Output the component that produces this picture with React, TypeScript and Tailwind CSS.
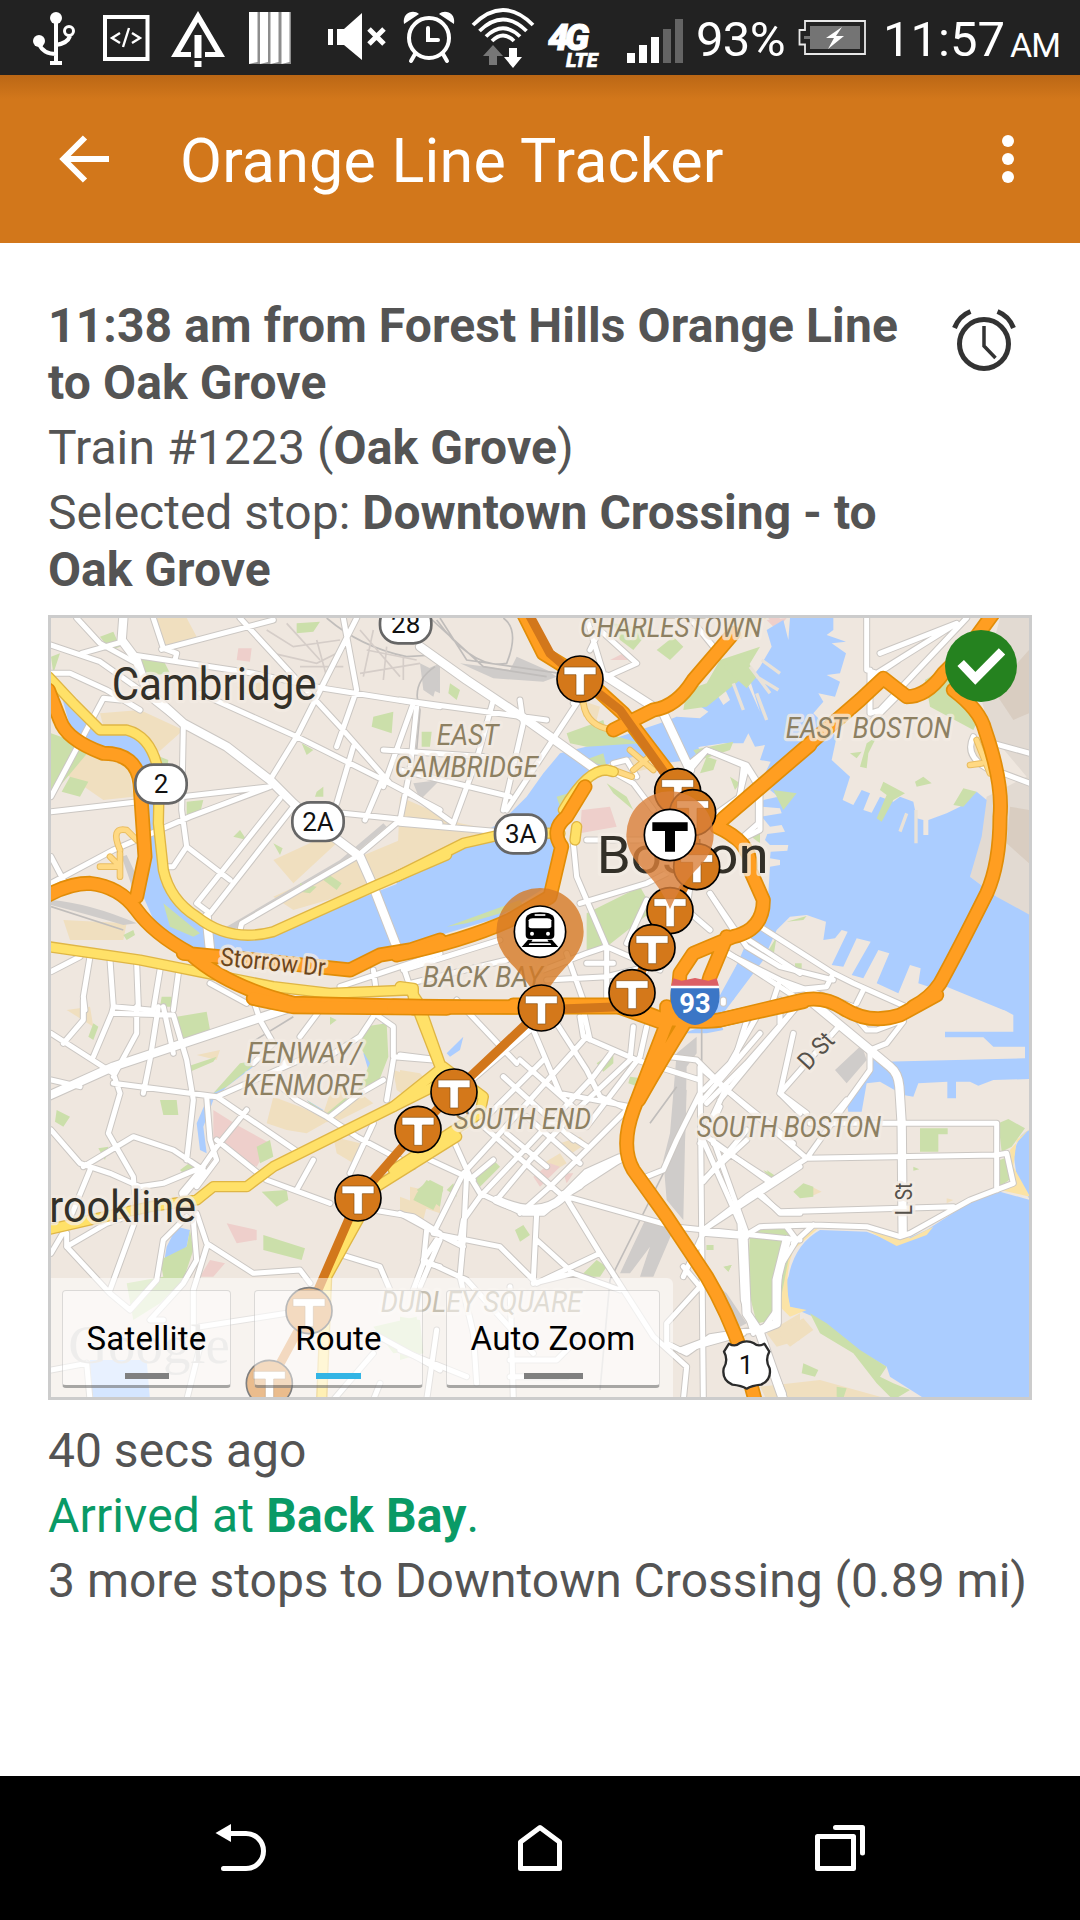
import type { ReactNode } from 'react';

interface GlyphProps {
  box: string;
  className: string;
  children: ReactNode;
}

function Glyph({ box, className, children }: GlyphProps) {
  return (
    <svg viewBox={box} className={`block shrink-0 ${className}`} fill="none" aria-hidden="true">
      {children}
    </svg>
  );
}

function StatusBar() {
  return (
    <div className="flex h-[75px] items-center bg-[#222222] pl-[30px] text-white">
      <Glyph box="30 0 50 75" className="h-[75px] w-[50px]">
        <circle cx="56" cy="18" r="6" fill="#fff" />
        <circle cx="39" cy="41" r="6" fill="#fff" />
        <circle cx="69" cy="31" r="4.5" stroke="#fff" strokeWidth="3" />
        <path d="M56 18V63M39 44C42 51 47 54 56 54M70 36C68 42 63 44 56 45" stroke="#fff" strokeWidth="4" />
        <path d="M50 61H62V65H50Z" fill="#fff" />
      </Glyph>
      <Glyph box="100 0 52 75" className="ml-5 h-[75px] w-[52px]">
        <rect x="105" y="17" width="42.5" height="42" stroke="#fff" strokeWidth="4" />
        <path d="M120 33L112 38L120 43M132 33L140 38L132 43M129 28L123 47" stroke="#fff" strokeWidth="2.4" />
      </Glyph>
      <Glyph box="170 0 56 75" className="ml-[18px] h-[75px] w-[56px]">
        <path
          d="M198 11L225 57H205V52H215.500L198 22L180.500 52H191V57H171Z"
          fill="#fff"
        />
        <path d="M194.500 35H201.500V58H194.500ZM194.500 61H201.500V67H194.500Z" fill="#fff" />
      </Glyph>
      <Glyph box="248 0 44 75" className="ml-[22px] h-[75px] w-[44px]">
        <rect x="249" y="12" width="42" height="52" fill="#8d8d8d" />
        <path d="M249 12H257.500V62L249 64ZM260 12H268V62L260 64ZM270.500 12H278.500V62L270.500 64ZM281.500 12H289.500V62L281.500 64Z" fill="#fff" />
      </Glyph>
      <Glyph box="326 0 62 75" className="ml-[34px] h-[75px] w-[62px]">
        <path d="M328 29H333V45H328ZM337 29H344L362 13V60L344 45H337Z" fill="#fff" />
        <path d="M369 29L384 44M384 29L369 44" stroke="#fff" strokeWidth="5" />
      </Glyph>
      <Glyph box="400 0 58 75" className="ml-3 h-[75px] w-[58px]">
        <circle cx="429" cy="38" r="20" stroke="#fff" strokeWidth="4" />
        <path d="M404 24C402 13 413 9 419 14ZM454 24C456 13 445 9 439 14Z" fill="#fff" />
        <path d="M415 54L411 61M443 54L447 61" stroke="#fff" strokeWidth="4" strokeLinecap="round" />
        <path d="M428 28V40H438" stroke="#fff" strokeWidth="4" strokeLinecap="round" />
      </Glyph>
      <Glyph box="470 0 66 75" className="ml-3 h-[75px] w-[66px]">
        <path
          d="M473 25Q503 -5 533 25M479.500 31Q503 8 526.500 31M486 36.500Q503 20 520 36.500M492 41Q503 30 514 41"
          stroke="#fff"
          strokeWidth="3.800"
        />
        <path d="M493 45L503 56H497V65H489V56H483Z" fill="#777" />
        <path d="M513 68L504 57H509V48H517V57H522Z" fill="#fff" />
      </Glyph>
      <div className="ml-3 flex w-[60px] flex-col pt-[17px] font-['Roboto'] font-black italic">
        <span className="text-[37px] leading-[29px] tracking-[-4px] [-webkit-text-stroke:1px_#fff]">4G</span>
        <span className="pl-[18px] text-[20px] leading-[17px] [-webkit-text-stroke:0.5px_#fff]">LTE</span>
      </div>
      <div className="ml-[19px] flex h-[50px] items-end gap-1">
        <div className="h-[10px] w-2 bg-white" />
        <div className="h-[18px] w-2 bg-white" />
        <div className="h-[26px] w-2 bg-white" />
        <div className="h-[34px] w-2 bg-[#646464]" />
        <div className="h-[44px] w-2 bg-[#646464]" />
      </div>
      <span className="ml-[13px] w-[102px] pt-[3px] text-[49px] leading-none tracking-[-0.7px]">93%</span>
      <Glyph box="798 0 70 75" className="h-[75px] w-[70px]">
        <path d="M805 21H865V54H805V44.500H799.500V30H805Z" stroke="#e8e8e8" strokeWidth="1.800" />
        <path d="M810 26H860V49H810V39H804V36H810Z" fill="#747474" />
        <path d="M842 27L826 38H834L828 49L844 36H836Z" fill="#fff" />
      </Glyph>
      <span className="ml-[15px] w-[127px] pt-[3px] text-[49px] leading-none">11:57</span>
      <span className="pt-[14px] text-[34px] leading-none tracking-[-1px]">AM</span>
    </div>
  );
}

function TitleBar() {
  return (
    <header className="flex h-[168px] items-center bg-[linear-gradient(#bb6715,#d2771b_24px)] pl-[59px] text-white">
      <Glyph box="58 133 52 52" className="h-[52px] w-[52px]">
        <path d="M84 137.500L62.500 159L84 180.500M62.500 159H108" stroke="#fff" strokeWidth="6" />
      </Glyph>
      <h1 className="ml-[69px] pt-[5px] text-[61px] leading-none tracking-[0.2px]">Orange Line Tracker</h1>
      <div className="ml-auto mr-[66px] flex flex-col gap-[6px]">
        <div className="size-3 rounded-full bg-white" />
        <div className="size-3 rounded-full bg-white" />
        <div className="size-3 rounded-full bg-white" />
      </div>
    </header>
  );
}

/* ---------- map ---------- */

interface Sector {
  at: string;
  water?: string;
  zones?: string;
  parks?: string;
  clinics?: string;
  sand?: string;
  rail?: string;
  streets?: string;
  avenues?: string;
  yellow?: string;
  ramps?: string;
  highway?: string;
}

// The map is drawn in six sectors, each with its own origin
const sectors: Sector[] = [
  {
    at: 'translate(0 0)',
    water:
      'M60 240L180 350L270 375L350 430L365 560L350 700L385 860L500 960L620 990L720 970L860 900L1000 850L1200 770V1000L1010 1040L930 1080L860 1075L540 1030L450 1010L350 950L310 860L325 700L315 480L270 430L160 400L90 350Z',
    zones:
      'M350 24H440L470 80L370 115ZM180 310L300 300L430 360L340 440L290 370L190 350ZM60 480L130 420L260 430L280 560L190 570ZM960 740L1200 640V740L1000 830L760 900L700 860ZM70 930L260 940L250 990L90 990ZM1040 24L1090 24L1080 50ZM590 230L700 210L690 260L600 250ZM700 750L830 690L900 690L760 820Z',
    parks:
      'M33 370L90 390L150 420L33 560ZM180 80L220 65L240 110L210 120ZM300 140L370 150L390 190L300 200ZM1000 320L1060 305L1055 370L995 350ZM340 500L380 490L385 450L360 440ZM90 500L145 515L120 560L65 545ZM440 575L490 570L480 610L440 620ZM370 880L480 970L460 980L390 950ZM770 40L840 35L820 65L770 70ZM785 400L820 420L800 435ZM860 790L905 820L890 840L850 810ZM780 820L830 830L810 850L780 845ZM700 700L728 715L720 735ZM830 545L850 530L850 560L825 560ZM250 975L280 960L285 975L260 990ZM365 1160L395 1160L395 1190L360 1190ZM600 660L620 690L580 680ZM1145 365L1175 365L1170 410L1145 410ZM33 140L60 130L40 190Z',
    clinics: 'M595 115L635 115L630 155L590 150Z',
    rail:
      'M33 870Q150 880 290 940L250 945Q150 915 33 885ZM245 740L260 735L310 840L290 870ZM560 950L900 750L1030 640L1040 650L910 760L580 960ZM1120 520L1200 510L1140 570ZM1155 180L1200 160V250L1165 235Z',
    streets:
      'M33 105L180 155L300 240L440 350M110 24L180 100L290 160M125 130L250 95M340 24L370 115L410 130L405 150M365 118L700 30M280 135L640 190L850 235L1200 290M33 190L90 190L200 240L300 300M240 270L190 265L33 560M430 350L425 600L440 710L570 810M440 710L400 770L375 770M600 24L900 350L1050 520M480 250L770 380L1030 510L1200 600M950 24L770 380L690 510M910 24L950 240L890 410M33 605L690 530M33 820L220 720L450 620L690 530M720 565L470 880L510 910L760 590M600 960L605 940L950 740L1080 630L1110 480L1130 290M940 410L890 580M910 610L1200 640M1030 500L975 630M33 1085L120 1040M150 1040L130 1160L135 1200M210 1050L220 1190L330 1200M290 1060L295 1190M360 1080L340 1200M415 1090L400 1200M510 1120L620 1180M900 1130L1200 1030M1000 1080L1010 1150M1090 1070L1110 1130M33 740L70 810',
    avenues:
      'M250 24L245 90L290 150L320 240L430 340L560 410L690 510L760 580L840 650L960 740L1000 830L1070 1010M500 920L510 1020',
    yellow:
      'M25 200L100 280L180 360L260 360Q340 380 358 500L355 640L370 780Q390 870 470 920Q570 1000 700 965L1000 830L1220 735M25 1010L300 1050L700 1130L870 1150L1110 1140L1150 1200',
    ramps: 'M240 720Q210 650 260 660L290 690M240 730L240 800M180 770L240 770L210 740',
    highway:
      'M25 240L60 330Q80 390 190 430Q290 430 300 520L315 740L290 860M25 855Q90 820 150 820Q240 830 290 900Q340 970 450 1030Q560 1130 760 1180L1220 1192M430 1030L640 1050L930 1080L1020 1035L1110 1020L1200 990',
  },
  {
    at: 'translate(1080 0)',
    water:
      'M900 420L830 320L780 340L600 400L480 430L430 490L380 560L300 640L140 720L-10 790V1015L290 925L440 830L480 650L540 560L570 490L630 460L700 440L790 460L870 450ZM1060 950L1110 965L1000 1170H965Z',
    zones:
      'M0 560L180 640L330 670L180 720L-10 790ZM540 270L600 290L590 330L550 320ZM690 410L780 400L770 470L690 490ZM980 24L1080 24L1050 80L960 100Z',
    parks:
      'M640 40L750 60L700 120L660 90ZM770 120L820 80L850 110L810 150ZM860 240L920 220L960 150L1080 110L1020 210L920 290L850 300ZM500 370L610 330L620 370L720 400L560 410L510 400ZM880 420L1000 395L990 420L900 450ZM560 910L720 830L760 900L620 1010L560 1020ZM150 220L180 240L170 270L145 250ZM470 560L520 545L530 600L490 620ZM140 950L360 870L370 890L200 940ZM1120 540L1190 550L1150 600ZM555 450L610 430L620 470ZM620 520L680 560L700 600L640 550Z',
    clinics: 'M545 600L630 590L650 650L540 670ZM1100 30L1160 24L1130 60ZM630 150L670 130L690 150Z',
    rail: 'M180 160L330 180L350 140L440 180L470 200L430 215L280 205ZM60 160L120 190L100 260L70 240Z',
    streets:
      'M0 270L440 330M360 270L370 340L310 600M280 270L230 450L160 640M-50 420L260 440M0 480L330 560M20 540L160 640M0 640L300 665M530 280L320 600M40 280L-50 530M560 24L610 190L520 280M570 120L600 60L710 160L620 200M870 24L940 110M870 480L920 420L1040 470L1080 540L1080 660L1020 690M1040 470L1010 590L950 640M560 690L740 690M520 700L530 800L620 1010L620 1190M540 880L740 820L800 790M740 870L680 1000M430 1080L560 1030L620 1010L780 1080M10 1080L300 990M30 1120L320 1050M500 1030L560 1200M440 1110L620 1100L780 1060M700 1200L740 1070M560 1060L640 1060M630 480L700 520L760 600M930 850L1000 960L1200 1090M940 1000L1200 1170M880 760L860 900L930 960M640 460L680 450L710 500M300 1200L420 1150',
    avenues: 'M60 110L200 210L380 330L590 480M620 200L790 310L870 480',
    yellow: 'M-10 800L190 700L330 668L480 670M490 600Q560 480 620 480L640 485M530 650L525 690M0 1130L40 1135L40 1200',
    ramps: 'M550 280Q560 350 640 360M760 430L700 480M690 420L760 480M640 480L695 500',
    highway:
      'M370 10L430 130L560 210L670 310L830 520M1000 70L880 210Q830 290 760 300L640 360M-10 1035Q200 990 330 930L450 860L485 710Q450 660 500 620L555 530M955 640L1230 405M950 650Q1060 700 1050 780L1090 870Q1090 960 1000 980L880 1030L840 1090L830 1200M980 980L930 1100L910 1170M350 1192L-20 1188M340 1185L640 1185L780 1235',
  },
  {
    at: 'translate(1920 0)',
    water:
      'M330 24H460V60L440 75L498 95L455 100L498 130L480 190L440 195L480 215L465 260L415 250L430 275L400 310L470 380L455 450L510 500L488 570L520 585L545 540L570 550L550 600L575 608L600 560L640 575L660 560L700 575L710 625L730 630V675H745V630L800 610L840 590L890 545L920 570L905 680L870 800L950 860L1050 915V1210L970 1200L800 1130L790 1145L715 1120L722 1075L690 1065L655 1150L590 1120L628 1030L595 1020L550 1105L515 1095L572 995L530 985L490 1070L455 1065L503 965L485 960L465 985L430 990L438 935L380 915L330 920L290 960L250 1050L130 1210H90L200 1010L270 900L265 850L270 770L300 765V750L270 745L272 725L322 722L325 705L270 705L255 690L262 672L315 665L305 645L270 650L245 620L305 610L300 595L245 590L250 570L295 560L270 540L290 515L250 500L272 455L240 450L255 405L225 410L205 370L190 400L130 400L60 410L0 440L-40 350L-10 320L60 325L85 305L40 275L60 235L100 235L130 285L150 270L115 195L190 195L240 305L210 210L240 170L275 110L260 60L310 30L325 90Z',
    zones: 'M170 24L260 24L200 60ZM880 390L905 390L930 490L880 450Z',
    parks:
      'M735 210L800 170L830 260L890 340L880 360L750 290ZM610 515L675 550L640 570L605 635L590 625L620 555L600 540ZM820 585L850 535L890 545L850 590ZM130 170L190 130L230 200L200 235ZM540 470L560 400L590 380L565 430L560 475ZM320 935L380 918L370 930ZM705 515L730 500L755 520L710 530ZM60 490L80 440L110 450L100 480ZM260 1030L290 980L280 1040ZM345 1060L365 1060L365 1080L345 1080ZM200 670L240 665L240 700ZM510 430L545 425L530 445ZM150 500L180 520L165 540Z',
    clinics: 'M265 24L300 24L285 50Z',
    streets:
      'M560 24V180L590 190L830 40L600 130M570 180V310L600 300L860 24M655 150L580 200M650 260L560 350M940 400L1050 430M970 490L1050 520M30 460L80 420L200 465L235 520V640L190 680M190 470L180 560L110 610M240 950L460 1090L520 1120L700 1200M100 1010L300 1110L520 1190M460 1090L440 1130L340 1140L300 1110L270 1200M550 1140L530 1180M90 850L200 1010L300 1070L460 1110M880 380Q850 440 930 480',
    ramps: 'M890 390L930 490M870 465L905 460',
    highway:
      'M940 10L860 120L790 190Q740 260 680 260L610 205L540 270L130 625M820 240Q900 300 915 360Q970 520 960 620Q960 760 920 850Q830 1030 780 1120Q750 1165 700 1190',
  },
  {
    at: 'translate(0 1170)',
    water:
      'M500 300L580 220L620 190L640 200L560 260L520 300L490 380L500 460L480 450L470 370ZM410 680L450 690L440 740L370 800L380 740ZM150 1080L320 1080L330 1200H150ZM970 160L1010 150L1030 60L1030 150L1000 200L1010 240L970 260L985 210ZM800 300L850 330L840 345Z',
    zones:
      'M700 290L780 320L870 360L800 400L740 390L680 370ZM880 250L960 280L1000 310L900 360L840 370ZM1060 210L1160 240L1100 290L1070 270ZM880 410L960 430L940 490L890 460ZM1110 560L1200 580V640L1110 610ZM80 30L150 20L160 80ZM470 165L540 150L530 180Z',
    parks:
      'M410 50L500 35L510 90L440 120L405 100ZM970 80L1040 70L1045 170L1010 260L950 280L990 190L960 140ZM440 200L530 170L520 185L450 215ZM600 190L660 180L560 260L520 280ZM50 330L90 350L70 380L45 365ZM360 300L410 300L415 345L370 345ZM670 705L795 745L785 780L670 750ZM665 575L740 570L745 600L710 620ZM370 830L360 780L440 740L450 690L460 750L430 840L360 910L280 960L260 850ZM800 300L860 340L920 290L920 320L860 360ZM1130 570L1170 540L1210 560L1200 620ZM175 445L205 440L195 480ZM145 110L160 70L175 80L160 120ZM1000 980L1130 950L1140 1050L1060 1060ZM870 50L890 60L870 75ZM650 440L690 420L700 470L660 490ZM420 510L460 480L480 500L440 530Z',
    clinics:
      'M520 330L600 380L690 430L650 500L600 480L520 420ZM560 670L650 690L650 720L590 730ZM510 780L555 790L520 830L480 830Z',
    streets:
      'M33 100L220 220L240 280L205 400L280 530L290 650L210 870M220 20L215 40L400 45L440 180L460 300L440 480M130 0L130 60L70 130M215 40L160 170M290 20L290 100L220 230M355 20L330 180L310 280M370 20L400 160M33 240L120 260M220 250L530 290L780 460M530 290L780 180M33 390L120 490L210 520L300 560L370 550L490 500M150 510L80 680L33 760M130 500L280 410L400 450L490 510M530 420L680 540L870 610M500 290L510 420L530 480L470 560M620 330L530 440L440 570M760 150L700 240L770 300L860 350L950 410L1120 500M660 60L700 130L640 190M640 0L660 60M840 30L780 110M1000 50L960 110L850 180M1010 45L1060 80L1060 170L1180 180M1060 180L1040 300M870 350L960 280L1030 240M1000 370L930 520M820 480L770 570M470 640L500 730L640 820L780 810L810 850M460 660L470 780L430 850L330 960L370 960M440 650L370 720L350 840L270 930L210 880L80 740L80 700M80 740L200 670L290 640M500 740L460 870L460 1000M1000 630L1120 650L1200 700M890 760L1020 800L1050 870M1160 690L1150 790L1120 870M480 980L740 940M33 1110L140 1090M140 1090L150 1200M440 1200L480 1040M1000 1000L1200 1110M880 1200L1000 1060M1160 790L1200 800M1020 1150L1000 1200',
    avenues: 'M20 290L220 200L640 60L790 10M480 520L430 580',
    yellow: 'M20 690L150 660L330 620L470 600L520 560L620 560L700 500L1200 250M1130 20L1200 200M1250 410L1010 560L860 830L845 1200',
    highway: 'M640 -5L760 20L1220 25',
  },
  {
    at: 'translate(1080 1170)',
    water: 'M140 160L190 110L180 150L150 170ZM850 100L960 60L970 90L920 100ZM1160 840L1200 780V930L1165 900Z',
    zones:
      'M0 210L60 220L100 260L40 290L0 270ZM480 430L540 410L560 430L500 470ZM0 590L80 620L70 660L0 640ZM430 490L480 460L500 490L450 520ZM1100 1000L1200 940V1020L1130 1040Z',
    parks:
      'M220 530L280 480L300 500L240 560ZM50 580L80 540L130 570L100 630L40 600ZM590 190L640 155L640 190L610 215ZM1050 700L1160 685L1175 730L1130 960L1070 970L1045 820ZM690 230L725 235L715 260L685 250ZM345 690L370 675L390 705L360 725ZM540 830L590 780L620 800L600 830ZM0 950L60 960L70 1060L0 1080ZM140 570L160 550L170 590ZM1100 510L1130 530L1110 530ZM920 735L940 735L940 750L920 750ZM970 800L995 795L985 815Z',
    clinics: 'M400 530L450 490L480 500L420 560ZM490 520L520 520L500 550Z',
    rail:
      'M830 160L890 110L890 160L860 200L850 660L800 600L790 480L810 400ZM740 650L820 690L760 830L720 830L750 740L690 820L660 820ZM900 820L980 880L1040 970L1020 980Z',
    streets:
      'M400 90L480 280L690 320M470 70L560 210L600 290L690 330M540 50L550 110L710 180L900 240M560 110L390 300L190 520L100 700M640 150L580 230L420 400L240 590L190 660L180 720M700 80L690 180L530 330L390 480L290 600M680 330L450 560L360 640M740 80L720 170L560 380M550 30L570 120M390 90L180 270M430 180L240 370L490 590M360 180L530 330M310 230L520 420M280 480L220 530M320 400L440 500M380 350L540 490M500 400L560 440M160 420L210 530L240 580L370 640L430 640L490 590L660 480M90 480L220 540M490 590L540 560L600 500L660 475M490 580L600 760L760 1010L860 1100L850 1200M500 590L820 680L1200 720M410 640L400 840M100 700L300 740L410 850L600 760M110 720L70 780L200 840L400 1060M200 520L190 720L180 830M0 640L110 700L190 740M410 720L520 820L660 870M120 720L60 860M180 830L220 1000L230 1150M900 200L910 1200M810 170L890 180L980 270L1180 430M1080 100L900 310M1190 20L960 300M900 430L980 260M900 400L1020 670L1030 900L1060 1000M910 540L1040 420M940 430L1110 540M960 320L920 410M910 690L1200 500M1040 710L910 700L850 830M900 280L830 420L790 510L740 530M850 800L900 860L800 970L800 1030L860 1060L930 1010L1060 990M1080 1010L1150 1180M1050 30L1000 190L940 240M1180 100L1140 280L1200 340M1080 580L1140 640H1200M0 1050L200 1130M400 850L520 820M330 1080L470 1080L520 1030M330 1130H500M330 860L340 1200M110 990L80 1200M170 0L350 190M0 165L120 180',
    avenues: 'M1080 990L1130 970L1130 840L1160 720M290 600Q420 660 490 590L560 520L660 475',
    yellow: 'M60 20L120 190M-20 320L130 200L250 290L240 340L-20 510',
    highway:
      'M-20 22L140 22L690 20L780 55Q900 70 960 60L1210 5M800 20L800 70L700 330Q660 440 700 510L800 650L920 830Q980 930 1030 1070L1065 1200M850 75Q790 170 716 300',
  },
  {
    at: 'translate(1920 1170)',
    water:
      'M900 -10L1000 45V95H795V112H910L940 140H1035V175L610 185L580 170L560 240L500 310L505 335L545 335L560 250L600 245L670 285L700 290L715 250L802 245V295H828V245H870L895 257L940 240L1050 237V-10ZM1050 390Q1010 400 1002 470L1010 530L1050 600L960 575L880 600L740 690L650 730L560 695L420 690Q330 740 320 870L330 920L400 950L500 1030L620 1100L630 1130L740 1200H1050V390Z',
    zones: 'M290 1000L370 955L400 990L330 1040ZM240 1160L420 1140L600 1190L740 1200H260ZM385 555L425 575L390 590ZM800 595L820 600L800 610Z',
    parks:
      'M210 710L240 690L320 685L335 740L290 830L270 960L230 970L205 870ZM720 385L803 385V403H775V455H720ZM955 370L985 357L1035 385L995 440L965 455ZM960 480L985 470L1000 530L960 560ZM340 575L370 550L400 560L400 590L360 595ZM370 1090L415 1110L405 1130L365 1120ZM390 940L440 970L540 1050L620 1100L600 1130L640 1150L690 1170L640 1200L590 1150L520 1060L420 1000ZM470 1160L500 1165L490 1195L470 1190ZM250 510L290 530L270 535ZM80 735L100 735L100 750H80ZM135 800L155 795L145 815ZM700 500L718 508L700 512Z',
    sand: 'M420 680L560 690L650 738L740 705L760 680L690 715L560 680ZM420 680Q310 730 305 830L300 920L330 950L380 930L330 920Q310 830 340 750ZM1050 385L1010 420L1000 500L1050 590L960 570L1000 550L990 450Z',
    rail: 'M465 210L545 135L560 180L500 250ZM0 260L20 270L15 420L0 480Z',
    streets:
      'M480 75L300 280L380 340M390 370L460 370L950 370V570M380 475L950 465L980 460L1000 550L870 600L690 700L660 710L560 680L400 675L240 680L190 710M230 580L300 635L820 620M570 150V210L380 475L200 590L70 690M350 20L200 190L80 310M230 50L150 190L70 270M70 210L380 475M80 410L260 540M300 0L300 70M100 420L200 700M200 390L70 545M320 680L350 720L300 800L290 930L240 1000M190 1000L10 1050M500 20L560 90L590 90L670 60M570 150L620 130L670 65M440 370L500 300M0 1050L80 1020L190 1000M130 0L130 10M400 675L340 730',
    avenues: 'M400 10L570 150M240 1000L310 1200M190 700L200 940L240 1000M570 150L630 200Q655 220 658 260L665 370L668 700',
    highway: 'M120 60L360 2Q430 -15 490 25Q570 75 660 45L770 -15',
  },
];

type Layer = 'water' | 'zones' | 'parks' | 'clinics' | 'sand' | 'rail';
type RoadLayer = 'streets' | 'avenues' | 'ramps' | 'yellow' | 'highway';

function Area({ layer, fill }: { layer: Layer; fill: string }) {
  return (
    <>
      {sectors.map((s) => s[layer] && <path key={s.at} transform={s.at} d={s[layer]} fill={fill} />)}
    </>
  );
}

function Road({ layer, color, width }: { layer: RoadLayer; color: string; width: number }) {
  return (
    <g fill="none" stroke={color} strokeWidth={width} strokeLinejoin="round" strokeLinecap="round">
      {sectors.map((s) => s[layer] && <path key={s.at} transform={s.at} d={s[layer]} />)}
    </g>
  );
}

interface LabelProps {
  x: number;
  y: number;
  width: number;
  size: number;
  children: string;
  color?: string;
  italic?: boolean;
}

function Label({ x, y, width, size, children, color = '#8d8062', italic = true }: LabelProps) {
  return (
    <text
      x={x}
      y={y}
      fontSize={size}
      textLength={width}
      lengthAdjust="spacingAndGlyphs"
      fill={color}
      fontStyle={italic ? 'italic' : 'normal'}
      stroke="#f3ece4"
      strokeOpacity="0.75"
      strokeWidth="20"
      strokeLinejoin="round"
      paintOrder="stroke"
    >
      {children}
    </text>
  );
}

function RouteShield({ x, y, children }: { x: number; y: number; children: string }) {
  return (
    <g transform={`translate(${x} ${y})`}>
      <rect x="-77" y="-58" width="154" height="116" rx="54" fill="#fff" stroke="#666" strokeWidth="8" />
      <text y="27" fontSize="78" textAnchor="middle" fill="#111">
        {children}
      </text>
    </g>
  );
}

const stations = [
  [1620, 207],
  [1913, 545],
  [1958, 608],
  [1970, 770],
  [1890, 902],
  [1836, 1013],
  [1776, 1148],
  [1504, 1194],
  [1242, 1446],
  [1134, 1558],
  [954, 1764],
  [807, 2102],
  [688, 2320],
];

function Station({ x, y }: { x: number; y: number }) {
  return (
    <g transform={`translate(${x} ${y})`}>
      <circle r="69" fill="#d4781a" stroke="#000" strokeWidth="5" />
      <path d="M-48 -36H48V-13H13V48H-12V-13H-48Z" fill="#fff" stroke="#8a5010" strokeWidth="2" />
    </g>
  );
}

const pinShape = 'M0 222Q-22 165 -75 108Q-131 55 -131 0A131 131 0 0 1 131 0Q131 55 75 108Q22 165 0 222Z';

function CityMap() {
  return (
    <svg viewBox="33 24 2934 2337" className="block h-full w-full font-['Roboto']" role="img" aria-label="Map of Boston">
      <rect x="33" y="24" width="2934" height="2337" fill="#efe7df" />
      <path d="M2880 24H2967V930L2870 860L2790 800L2840 560L2960 500L2850 370L2820 250Z" fill="#e2dad2" />
      <path d="M2860 240L2967 120V310L2920 330ZM2910 590L2967 600V760L2900 700Z" fill="#d9cdc1" />

      <Area layer="zones" fill="#f0dfbf" />
      <Area layer="clinics" fill="#eecfcb" />
      <Area layer="rail" fill="#cfccca" />
      <Area layer="water" fill="#abcdff" />
      <Area layer="sand" fill="#fbe3a6" />
      <Area layer="parks" fill="#cbdfaa" />

      {/* piers reaching into the harbour */}
      <path
        d="M2080 220L2110 300M2150 250L2180 330M2130 170L2190 250M2150 200L2215 240M2165 150L2220 190M2600 610L2580 665M2628 600V700"
        stroke="#e9e2d8"
        strokeWidth="10"
      />

      {/* rail lines */}
      <g fill="none" stroke="#c0bdbb" strokeWidth="5">
        <path d="M860 24Q960 110 1100 140L1180 135M1200 24L1280 150L1560 190M1190 30Q1300 180 1400 160Q1440 60 1390 24M1185 170Q1110 220 1140 300L1130 420M1170 24L1330 170L1520 200" />
        <path d="M1985 1250V1420M1890 1650L1710 2010L1680 2340M1910 1430L1830 1540M630 1300L760 1220M33 890L250 960" />
      </g>
      {/* side streets of Somerville */}
      <path
        d="M680 60L760 110L900 90M700 130L830 160L910 120M740 40L840 150M780 170L910 170M830 90L860 200M960 60L1080 200M980 120L1130 150M960 190L1140 160M1000 60L970 200M1040 110L1030 210M1090 140V210"
        fill="none"
        stroke="#d5cdc8"
        strokeWidth="5"
      />

      <Road layer="streets" color="#cbc7c3" width={21} />
      <Road layer="avenues" color="#cbc7c3" width={31} />
      <Road layer="streets" color="#fff" width={15} />
      <Road layer="avenues" color="#fff" width={25} />
      <Road layer="ramps" color="#e9bd62" width={20} />
      <Road layer="ramps" color="#ffd983" width={14} />
      <Road layer="yellow" color="#dfb645" width={34} />
      <Road layer="yellow" color="#ffe168" width={26} />
      <Road layer="highway" color="#e18d08" width={45} />
      <Road layer="highway" color="#ff9e21" width={35} />

      <Label x={215} y={270} width={615} size={140} color="#333028" italic={false}>Cambridge</Label>
      <Label x={1670} y={790} width={516} size={154} color="#333028" italic={false}>Boston</Label>
      <Label x={28} y={1835} width={440} size={134} color="#333028" italic={false}>rookline</Label>
      <Label x={1620} y={82} width={546} size={88}>CHARLESTOWN</Label>
      <Label x={1190} y={406} width={186} size={88}>EAST</Label>
      <Label x={1064} y={501} width={430} size={88}>CAMBRIDGE</Label>
      <Label x={2237} y={384} width={498} size={88}>EAST BOSTON</Label>
      <Label x={1148} y={1130} width={360} size={88}>BACK BAY</Label>
      <Label x={620} y={1358} width={345} size={88}>FENWAY/</Label>
      <Label x={610} y={1454} width={363} size={88}>KENMORE</Label>
      <Label x={1241} y={1556} width={412} size={88}>SOUTH END</Label>
      <Label x={1970} y={1582} width={553} size={88}>SOUTH BOSTON</Label>
      <Label x={1022} y={2106} width={604} size={88}>DUDLEY SQUARE</Label>
      <g transform="rotate(6 540 1060)">
        <Label x={540} y={1066} width={316} size={76} color="#6b451c" italic={false}>Storrow Dr</Label>
      </g>
      <g transform="rotate(-47 2305 1384)">
        <Label x={2305} y={1384} width={122} size={74} color="#55514a" italic={false}>D St</Label>
      </g>
      <g transform="rotate(-90 2615 1816)">
        <Label x={2615} y={1816} width={98} size={72} color="#55514a" italic={false}>L St</Label>
      </g>
      <text x="85" y="2258" fontSize="165" textLength="485" lengthAdjust="spacingAndGlyphs" fill="#c3bfbb" className="font-['Liberation_Serif']">
        Google
      </text>

      <RouteShield x={1097} y={42}>28</RouteShield>
      <RouteShield x={363} y={522}>2</RouteShield>
      <RouteShield x={834} y={635}>2A</RouteShield>
      <RouteShield x={1442} y={672}>3A</RouteShield>

      {/* interstate 93 */}
      <path d="M1893 1133H2037Q2045 1190 2015 1222Q1985 1245 1965 1245Q1945 1245 1915 1222Q1885 1190 1893 1133Z" fill="#3b76c6" />
      <path d="M1893 1128L1900 1105L1925 1112L1965 1104L2005 1112L2030 1105L2037 1128Z" fill="#dc6065" />
      <path d="M1893 1131H2037" stroke="#fff" strokeWidth="8" />
      <text x="1965" y="1210" fontSize="82" fontWeight="700" textAnchor="middle" fill="#fff">
        93
      </text>

      {/* US route 1 */}
      <path
        d="M2067 2201Q2085 2212 2098 2200Q2108 2194 2120 2194Q2132 2194 2142 2200Q2155 2212 2173 2201L2188 2225Q2174 2250 2189 2275Q2195 2310 2163 2324Q2135 2327 2120 2336Q2105 2327 2077 2324Q2045 2310 2051 2275Q2066 2250 2052 2225Z"
        fill="#fff"
        stroke="#2b2b2b"
        strokeWidth="7"
        strokeLinejoin="round"
      />
      <text x="2118" y="2293" fontSize="78" textAnchor="middle" fill="#111">
        1
      </text>

      <path
        d="M1460 0L1530 130L1620 207L1740 300L1913 545L1958 608L1970 770L1890 902L1836 1013L1776 1148L1740 1190L1504 1199L1242 1446L1134 1558L954 1764L807 2102L688 2320"
        fill="none"
        stroke="#d2771b"
        strokeWidth="27"
        strokeLinejoin="round"
      />

      <path transform="translate(1500 965)" d={pinShape} fill="#d67a26" fillOpacity="0.8" />
      {stations.map(([x, y]) => (
        <Station key={y} x={x} y={y} />
      ))}
      <path transform="translate(1890 675)" d={pinShape} fill="#d9803a" fillOpacity="0.8" />

      <g transform="translate(1890 675)">
        <circle r="77" fill="#fff" stroke="#000" strokeWidth="5" />
        <path d="M-53 -38H53V-12H15V50H-15V-12H-53Z" fill="#000" />
      </g>

      {/* train position */}
      <g transform="translate(1500 965)">
        <circle r="77" fill="#fff" stroke="#000" strokeWidth="5" />
        <path d="M-43 -35Q-43 -58 0 -58Q43 -58 43 -35V10Q43 22 30 22H-30Q-43 22 -43 10Z" fill="#000" />
        <path d="M-34 -34Q-32 -40 -22 -40H22Q32 -40 34 -34V-15Q32 -10 24 -10H-24Q-32 -10 -34 -15Z" fill="#fff" />
        <path d="M-16 -50H16" stroke="#fff" strokeWidth="5" />
        <circle cx="-24" cy="6" r="6" fill="#fff" />
        <circle cx="24" cy="6" r="6" fill="#fff" />
        <path d="M-36 24H-22L-26 30H26L22 24H36L55 46H-55ZM-31 35L-34 40H34L31 35Z" fill="#000" fillRule="evenodd" />
      </g>

      <circle cx="2823" cy="168" r="108" fill="#25821f" />
      <path d="M2762 159L2806 205L2886 124" fill="none" stroke="#fff" strokeWidth="27" />
    </svg>
  );
}

interface MapToggleProps {
  label: string;
  width: string;
  bar: string;
}

function MapToggle({ label, width, bar }: MapToggleProps) {
  return (
    <button
      className={`flex h-[98px] flex-col items-center rounded-[4px] border border-b-[3px] border-[#00000020] border-b-[#00000055] bg-white/45 pt-[29px] ${width}`}
    >
      <span className="text-[33px] leading-[38px] tracking-[0.2px] text-black">{label}</span>
      <span className={`mt-[15px] h-[6px] ${bar}`} />
    </button>
  );
}

const toggles: MapToggleProps[] = [
  { label: 'Satellite', width: 'w-[169px]', bar: 'w-11 bg-[#808080]' },
  { label: 'Route', width: 'w-[169px]', bar: 'w-[45px] bg-[#33b5e5]' },
  { label: 'Auto Zoom', width: 'w-[214px]', bar: 'w-[59px] bg-[#808080]' },
];

function MapPanel() {
  return (
    <div className="relative mt-[17px] h-[785px] w-[984px] border-[3px] border-[#cccccc]">
      <CityMap />
      <div className="absolute bottom-0 left-0 flex h-[119px] w-[622px] gap-[23px] rounded-tr-[6px] bg-white/50 pl-[11px] pt-3">
        {toggles.map((t) => (
          <MapToggle key={t.label} {...t} />
        ))}
      </div>
    </div>
  );
}

function NavBar() {
  return (
    <nav className="flex h-[144px] items-center justify-between bg-black px-[211px]">
      <Glyph box="211 1820 60 56" className="h-[56px] w-[60px]">
        <path d="M215.500 1833L231 1824V1842Z" fill="#fff" />
        <path d="M229 1833.500H246A17.500 17.500 0 0 1 246 1868.500H223.500" stroke="#fff" strokeWidth="5" strokeLinecap="round" />
      </Glyph>
      <Glyph box="510 1820 60 56" className="h-[56px] w-[60px]">
        <path d="M520.500 1842L540 1827.500L559.500 1842V1868.500H520.500Z" stroke="#fff" strokeWidth="5" strokeLinejoin="round" />
      </Glyph>
      <Glyph box="809 1820 60 56" className="h-[56px] w-[60px]">
        <rect x="817.500" y="1836.500" width="36" height="32" stroke="#fff" strokeWidth="5" strokeLinejoin="round" />
        <path d="M835.500 1827.500H862.500V1853" stroke="#fff" strokeWidth="5" strokeLinecap="round" strokeLinejoin="round" />
      </Glyph>
    </nav>
  );
}

export default function App() {
  return (
    <div className="flex h-[1920px] w-[1080px] flex-col overflow-hidden bg-white font-['Roboto',sans-serif]">
      <StatusBar />
      <TitleBar />

      <main className="flex-1 px-12 pt-[54px] text-[48px] leading-[57px] text-[#545454]">
        <div className="flex justify-between">
          <div className="flex w-[880px] flex-col gap-2">
            <p className="font-bold tracking-[0.1px]">
              11:38 am from Forest Hills Orange Line
              <br />
              to Oak Grove
            </p>
            <p className="tracking-[0.1px]">
              Train #1223 (<b>Oak Grove</b>)
            </p>
            <p>
              Selected stop:{' '}
              <b>
                Downtown Crossing - to
                <br />
                Oak Grove
              </b>
            </p>
          </div>
          <Glyph box="950 305 68 70" className="mr-[14px] mt-2 h-[70px] w-[68px]">
            <circle cx="984" cy="344" r="24.500" stroke="#333" strokeWidth="5" />
            <path d="M954.500 328Q959 316 970.500 311.500M1013.500 328Q1009 316 997.500 311.500" stroke="#333" strokeWidth="5" />
            <path d="M984 326V346L995.500 358" stroke="#333" strokeWidth="3.500" />
          </Glyph>
        </div>

        <MapPanel />

        <div className="mt-[22px] flex flex-col gap-2 whitespace-nowrap">
          <p>40 secs ago</p>
          <p className="tracking-[0.15px] text-[#099a66]">
            Arrived at <b>Back Bay</b>.
          </p>
          <p>3 more stops to Downtown Crossing (0.89 mi)</p>
        </div>
      </main>

      <NavBar />
    </div>
  );
}
